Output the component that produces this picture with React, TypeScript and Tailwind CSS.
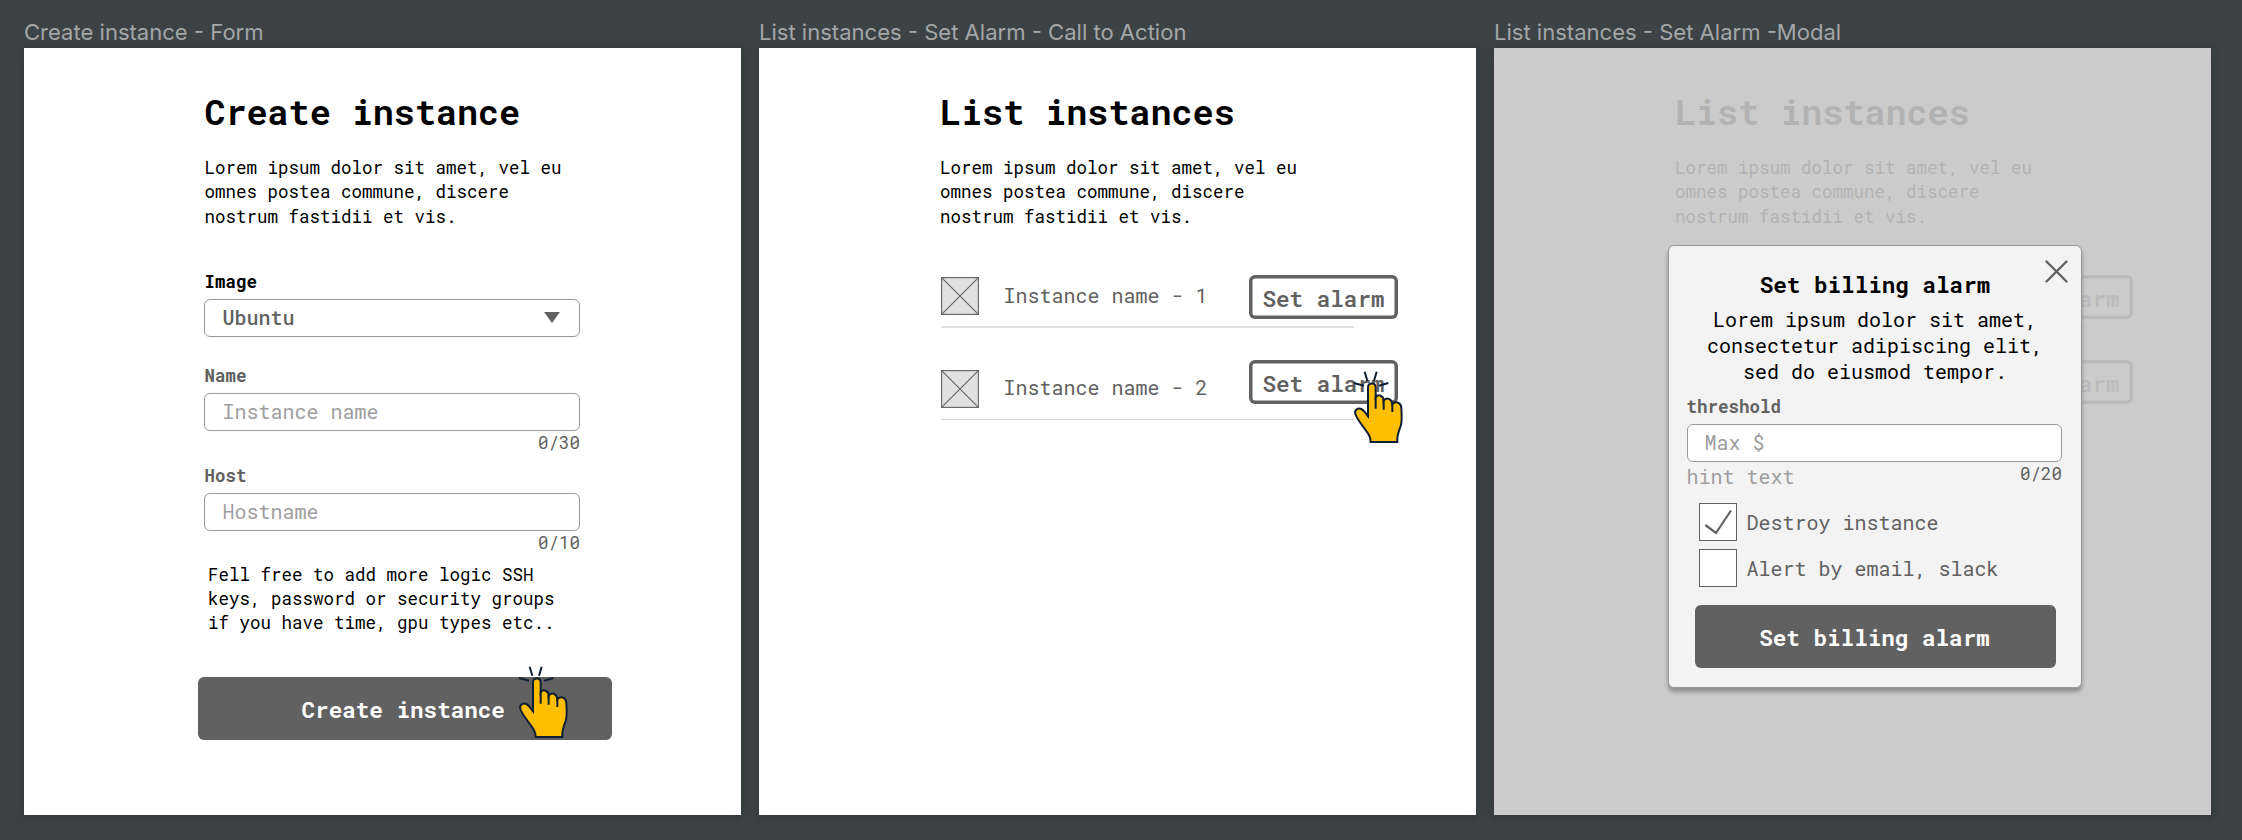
import type { ReactNode } from "react";

function Frame({ title, tone = "bg-white", children }: { title: string; tone?: string; children: ReactNode }) {
  return (
    <section className="w-[717px] shrink-0">
      <h2 className="h-12 whitespace-nowrap pt-[18px] font-['Inter',sans-serif] text-[22.05px] leading-[28px] text-[#a4a6a7]">{title}</h2>
      <div className={"relative h-[767px] w-[717px] shadow-[0_2px_10px_rgba(0,0,0,0.2)] " + tone}>{children}</div>
    </section>
  );
}

function Hand({ className }: { className: string }) {
  return (
    <svg className={"absolute " + className} width="52" height="74" viewBox="54 46 156 222" fill="none" stroke="#0f1f33">
      <path
        d="M107 262 C108 240 92 228 83 214 C75 203 66 192 61 178 C57 166 69 158 79 163 C89 168 93 178 99 185 L99 98 C99 83 122 83 122 98 L122 128 C130 116 146 124 146 138 C154 125 171 133 172 148 C182 137 199 144 199 160 C200 178 202 199 197 214 C191 230 185 244 187 262 Z"
        fill="#ffbe00"
        strokeWidth="6"
      />
      <path d="M122 126V162M146 136V165M172 146V172" strokeWidth="6" />
      <path d="M89 51L97 78M125 51L117 78M57 85L87 93M160 85L132 93" strokeWidth="6" />
    </svg>
  );
}

function Intro({ title }: { title: string }) {
  return (
    <>
      <h1 className="h-11 whitespace-nowrap text-[35.1px] font-bold leading-[45px]">{title}</h1>
      <p className="mt-[23px] h-[73px] whitespace-nowrap text-[17.5px] leading-[24.4px]">
        Lorem ipsum dolor sit amet, vel eu
        <br />
        omnes postea commune, discere
        <br />
        nostrum fastidii et vis.
      </p>
    </>
  );
}

function Input({ children, className = "" }: { children: ReactNode; className?: string }) {
  return (
    <div className={"flex h-[37.5px] w-[375.5px] items-center justify-between rounded-[6px] border border-[#999] bg-white pb-px pl-[17px] pr-[19px] text-[20px] leading-[24px] text-[#9e9e9e] " + className}>
      {children}
    </div>
  );
}

function Thumb({ className }: { className: string }) {
  return (
    <svg className={"ml-px shrink-0 " + className} width="38" height="38" viewBox="0 0 38 38" fill="#e0e0e0" stroke="#616161" strokeWidth="1.1">
      <rect x="0.6" y="0.6" width="36.8" height="36.8" />
      <path d="M0.6 0.6L37.4 37.4M37.4 0.6L0.6 37.4" />
    </svg>
  );
}

function AlarmButton() {
  return (
    <button className="ml-auto flex h-[44px] w-[149px] items-center justify-center whitespace-nowrap rounded-[6px] pt-[2px] text-[22.6px] font-semibold leading-[28px] text-[#616161] shadow-[inset_0_0_0_3.5px_#616161]">
      Set alarm
    </button>
  );
}

function InstanceList() {
  return (
    <div className="pl-[181px] pt-[41px]">
      <Intro title="List instances" />
      <div className="mt-[46px] flex h-[51px] w-[458px] items-start">
        <Thumb className="mt-[2px]" />
        <span className="ml-[24.5px] mt-[7.5px] whitespace-nowrap text-[20px] leading-[24px] text-[#616161]">Instance name - 1</span>
        <AlarmButton />
      </div>
      <div className="ml-px h-[2px] w-[413px] bg-[#e0e0e0]" />
      <div className="mt-8 flex h-[59px] w-[458px] items-start">
        <Thumb className="mt-[10px]" />
        <span className="ml-[24.5px] mt-[15px] whitespace-nowrap text-[20px] leading-[24px] text-[#616161]">Instance name - 2</span>
        <AlarmButton />
      </div>
      <div className="ml-px h-px w-[413px] bg-[#cfcfcf]" />
    </div>
  );
}

function Modal() {
  return (
    <div className="absolute left-[174px] top-[197px] h-[443px] w-[414px] rounded-[6px] border border-[#999] bg-[#f3f3f3] pt-[23.5px] shadow-[0_4px_4px_rgba(0,0,0,0.3)]">
      <svg className="absolute right-[13px] top-[14px]" width="23" height="23" viewBox="0 0 23 23" stroke="#616161" strokeWidth="2.4" strokeLinecap="round">
        <path d="M1.5 1.5L21.5 21.5M21.5 1.5L1.5 21.5" />
      </svg>
      <h3 className="text-center text-[22.6px] font-bold leading-[28px]">Set billing alarm</h3>
      <p className="mt-[8px] h-[79px] whitespace-nowrap text-center text-[20px] leading-[26.3px]">
        Lorem ipsum dolor sit amet,
        <br />
        consectetur adipiscing elit,
        <br />
        sed do eiusmod tempor.
      </p>
      <div className="ml-[17.5px] mt-[10px] w-[375.5px]">
        <div className="text-[17.5px] font-bold leading-[24px] text-[#616161]">threshold</div>
        <Input className="mt-[5.5px]">Max $</Input>
        <div className="flex h-[41px] items-start justify-between pt-px">
          <span className="text-[20px] leading-[26px] text-[#9e9e9e]">hint text</span>
          <span className="text-[17.5px] leading-[22px] text-[#616161]">0/20</span>
        </div>
        <div className="ml-[12.5px] flex h-[38px] items-center gap-[9.5px] text-[20px] leading-[26px] text-[#616161]">
          <svg width="38" height="38" viewBox="0 0 38 38" fill="none" stroke="#616161">
            <rect x="0.5" y="0.5" width="37" height="37" fill="white" />
            <path d="M6.3 22L17 30L32 7.5" strokeWidth="2.2" />
          </svg>
          Destroy instance
        </div>
        <div className="ml-[12.5px] mt-[8px] flex h-[38px] items-center gap-[9.5px] whitespace-nowrap text-[20px] leading-[26px] text-[#616161]">
          <span className="size-[38px] border border-[#616161] bg-white" />
          Alert by email, slack
        </div>
      </div>
      <button className="ml-[26px] mt-[18.5px] block h-[63px] w-[361px] rounded-[6px] bg-[#616161] pr-[2px] text-[22.6px] font-bold leading-[28px] text-white">Set billing alarm</button>
    </div>
  );
}

export default function App() {
  return (
    <main className="flex h-[840px] w-[2242px] gap-[18px] overflow-hidden bg-[#3d4245] pl-[24px] font-['Roboto_Mono','DejaVu_Sans_Mono',monospace] text-black">
      <Frame title="Create instance - Form">
        <div className="pl-[180.4px] pt-[41px]">
          <Intro title="Create instance" />
          <div className="mt-[41px] text-[17.5px] font-bold leading-[24px]">Image</div>
          <Input className="mt-[5px]">
            <span className="font-medium text-[#616161]">Ubuntu</span>
            <svg width="16" height="12" viewBox="0 0 16 12" fill="#616161">
              <path d="M0 1H16L8 12Z" />
            </svg>
          </Input>
          <div className="mt-[27px] text-[17.5px] font-bold leading-[24px] text-[#616161]">Name</div>
          <Input className="mt-[5.5px]">Instance name</Input>
          <div className="mt-[0.5px] w-[375.5px] text-right text-[17.5px] leading-[24px] text-[#616161]">0/30</div>
          <div className="mt-[8.5px] text-[17.5px] font-bold leading-[24px] text-[#616161]">Host</div>
          <Input className="mt-[5.5px]">Hostname</Input>
          <div className="mt-[0.5px] w-[375.5px] text-right text-[17.5px] leading-[24px] text-[#616161]">0/10</div>
          <p className="ml-[3.6px] mt-[7.5px] h-[73px] whitespace-nowrap text-[17.5px] leading-[24.4px]">
            Fell free to add more logic SSH
            <br />
            keys, password or security groups
            <br />
            if you have time, gpu types etc..
          </p>
          <button className="-ml-[6.4px] mt-[41.5px] block h-[62.5px] w-[413.5px] rounded-[6px] bg-[#616161] pr-[3px] pt-px text-[22.6px] font-bold leading-[28px] text-white">
            Create instance
          </button>
        </div>
        <Hand className="left-[494px] top-[617px]" />
      </Frame>
      <Frame title="List instances - Set Alarm - Call to Action">
        <InstanceList />
        <Hand className="left-[594px] top-[322px]" />
      </Frame>
      <Frame title="List instances - Set Alarm -Modal">
        <InstanceList />
        <div className="absolute inset-0 bg-[#c5c5c5]/90" />
        <Modal />
      </Frame>
    </main>
  );
}
